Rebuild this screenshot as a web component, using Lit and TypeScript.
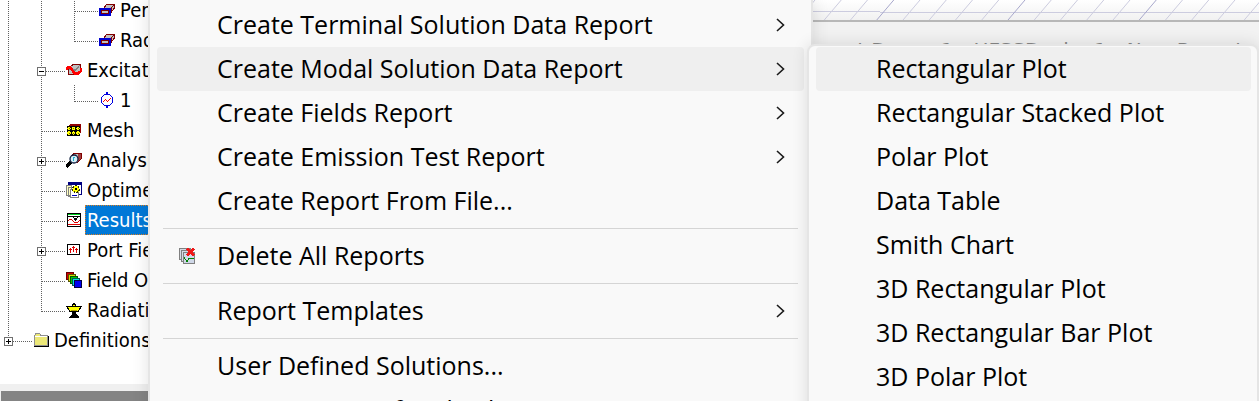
import { LitElement, html, svg, css, nothing } from "lit";
import { customElement } from "lit/decorators.js";
import { classMap } from "lit/directives/class-map.js";

const box = svg`
  <path d="M4.500 6.500 7.500 2.500H15V6.500L12 10.500V6.500Z" fill="#c0c0c0" stroke="#800000"/>
  <path d="M12 6 15 3" stroke="#800000"/>
  <rect x="1" y="7" width="10" height="6" fill="#c0c0c0" stroke="#0000d0" stroke-width="2"/>
  <rect x="2.500" y="8.500" width="7" height="3" fill="#c0c0c0" stroke="#800000"/>`;

const icons: Record<string, unknown> = {
  box,
  excitation: svg`
    <path d="M2.500 6.500 7 2.500H14.500V9L11 12.500H2.500Z" fill="#c0c0c0" stroke="#800000"/>
    <path d="M3 7H10L14 3M7 10 13 5" fill="none" stroke="#808080"/>
    <path d="M0 8 2 5.500H4L9 11.500H12L15 9V6" fill="none" stroke="#f00" stroke-width="2.600"/>`,
  port: svg`
    <path d="M5.500 2.500H10.500L13.500 5.500V10.500L10.500 13.500H5.500L2.500 10.500V5.500Z" fill="#fff" stroke="#0000e0"/>
    <path d="M8 0V3M8 13V16" stroke="#0000e0" stroke-width="2"/>
    <path d="M4 9.500H5M5 8.500H6M6 7.500H7M7 8.500H8M8 9.500H9M9 8.500H10M10 7.500H11M11 6.500H12" fill="none" stroke="#f00" stroke-width="1.800"/>`,
  mesh: svg`
    <path d="M2 4 5 2H15V10L13 12V4Z" fill="#900000"/>
    <rect x="1" y="4" width="13" height="10" fill="#000"/>
    ${[3, 7.5, 12].map((x) => [6.5, 11].map((y) => svg`<circle cx=${x} cy=${y} r="1.800" fill="#ff0"/><rect x=${x - 0.5} y=${y - 0.5} width="1" height="1" fill="#660"/>`))}`,
  analysis: svg`
    <path d="M5 4 9 1H15.500V6L11 11Z" fill="#c0c0c0" stroke="#800000"/>
    <path d="M12 2H15V6L12 9Z" fill="#a04040"/>
    <path d="M0 15 5 10" stroke="#000" stroke-width="3"/>
    <circle cx="8" cy="7" r="4" fill="#d8eef8" stroke="#102040" stroke-width="1.300" shape-rendering="auto"/>
    <path d="M7 9V5H9" fill="none" stroke="#20b0d0"/>`,
  optimetrics: svg`
    <rect x="2.500" y="0.500" width="13" height="12" fill="#fff" stroke="#000080"/>
    <path d="M2 1.500H16" stroke="#000080" stroke-width="2"/>
    <path d="M0.500 3.500H5V13.500H0.500ZM2.500 5.500H8V14.500H2.500Z" fill="#ffffc0" stroke="#808080"/>
    <rect x="4.500" y="7.500" width="8" height="8" fill="#fff" stroke="#808080"/>
    <circle cx="10" cy="7" r="3.500" fill="#ff0" stroke="#303000" stroke-dasharray="2 1" stroke-width="1.500"/>
    <circle cx="10" cy="7" r="1.200" fill="#000"/>
    <path d="M6 13.500H11" stroke="#0000c0"/>`,
  results: svg`
    <rect x="1.500" y="1.500" width="13" height="13" fill="#fff" stroke="#000"/>
    <path d="M2 2.500H14" stroke="#00d020"/><path d="M2 4.500H14" stroke="#000"/>
    <path d="M2 8.500H3M3 7.500H6M6 8.500H7M7 9.500H8M8 10.500H12M12 9.500H13M13 8.500H14M2 12.500H14" fill="none" stroke="#e00000"/>
    <path d="M7 5.500H8M11 5.500H12M8 6.500H11M8 7.500H11M9 8.500H10" stroke="#000"/>`,
  portField: svg`
    <rect x="1.500" y="2.500" width="12" height="10" fill="#fff" stroke="#000"/>
    <path d="M4.500 6V11M7.500 4V10M10.500 6V11M3 7.500H6M6 5.500H9M9 7.500H12" stroke="#e00000"/>`,
  field: svg`
    <rect x="0.500" y="0.500" width="7" height="7" fill="#d00000" stroke="#600"/>
    <rect x="2.500" y="2.500" width="7" height="7" fill="#d8d800" stroke="#550"/>
    <rect x="4.500" y="4.500" width="7" height="7" fill="#00c800" stroke="#050"/>
    <rect x="6.500" y="6.500" width="7" height="7" fill="#00e0e0" stroke="#055"/>
    <rect x="8.500" y="8.500" width="7" height="7" fill="#0000f0" stroke="#000040"/>`,
  radiation: svg`
    <path d="M0.500 4.500H15.500L12 9.500H4Z" fill="#ff0" stroke="#000"/>
    <path d="M6 4 8 1 10 4Z" fill="#ff0" stroke="#000"/>
    <path d="M5 8H11" stroke="#b0a000"/>
    <path d="M6 10H10V12L13 15V16H3V15L6 12Z" fill="#000"/>`,
  folder: svg`
    <path d="M1.500 13.500V3.500L3 1.500H6.500L8 3.500H14.500V13.500Z" fill="#ece878" stroke="#909090"/>
    <path d="M2 4.500H14" stroke="#fff"/>
    <path d="M1 14H15V4" fill="none" stroke="#000"/>`,
  remove: svg`
    <rect x="0.500" y="0.500" width="11" height="11" fill="#d4dae4" stroke="#808080"/>
    <rect x="2.500" y="2.500" width="11" height="11" fill="#d4dae4" stroke="#808080"/>
    <rect x="4.500" y="4.500" width="11" height="11" fill="#d0d8e8" stroke="#808080"/>
    <path d="M5 9 8 14 10 10.500H15" fill="none" stroke="#008000"/>
    <path d="M8 0.500 15 7.500M15 0.500 8 7.500" stroke="#f01818" stroke-width="2.200"/>`,
};

const icon = (name: string) => html`<svg class="icon" width="16" height="16" viewBox="0 0 16 16" shape-rendering="crispEdges" aria-hidden="true">${icons[name]}</svg>`;

/* Guide codes: "|" passing line, "t" branch, "l" last branch, "+" / "-" branch with expander, "e" last branch with expander */
interface Node { guides: string; icon: string; label: string; selected?: boolean }
const nodes: Node[] = [
  { guides: "||t", icon: "box", label: "PerfE1" },
  { guides: "||l", icon: "box", label: "Rad1" },
  { guides: "|-", icon: "excitation", label: "Excitations" },
  { guides: "||l", icon: "port", label: "1" },
  { guides: "|t", icon: "mesh", label: "Mesh" },
  { guides: "|+", icon: "analysis", label: "Analysis" },
  { guides: "|t", icon: "optimetrics", label: "Optimetrics" },
  { guides: "|t", icon: "results", label: "Results", selected: true },
  { guides: "|+", icon: "portField", label: "Port Field Display" },
  { guides: "|t", icon: "field", label: "Field Overlays" },
  { guides: "|l", icon: "radiation", label: "Radiation" },
  { guides: "e", icon: "folder", label: "Definitions" },
];

const guide = (code: string) => {
  const expander = "+-e".includes(code);
  const branch = code !== "|";
  const last = code === "l" || code === "e";
  return html`<svg class="guide" width="33" height="30" viewBox="0 0 33 30" shape-rendering="crispEdges" aria-hidden="true">
    <g fill="none" stroke="#606060" stroke-dasharray="1 1">
      <path d=${last ? "M8.500 0V17" : "M8.500 0V30"} />
      ${branch ? svg`<path d="M9 16.500H33"/>` : nothing}
    </g>
    ${expander
      ? svg`<rect x="4.500" y="12.500" width="8" height="8" fill="#fff" stroke="#707070"/>
          <path d=${code === "-" ? "M6 16.500H11" : "M6 16.500H11M8.500 14V19"} stroke="#000"/>`
      : nothing}
  </svg>`;
};

interface Item { label?: string; sub?: boolean; icon?: string; active?: boolean }
const mainItems: Item[] = [
  { label: "Create Terminal Solution Data Report", sub: true },
  { label: "Create Modal Solution Data Report", sub: true, active: true },
  { label: "Create Fields Report", sub: true },
  { label: "Create Emission Test Report", sub: true },
  { label: "Create Report From File..." },
  {},
  { label: "Delete All Reports", icon: "remove" },
  {},
  { label: "Report Templates", sub: true },
  {},
  { label: "User Defined Solutions..." },
  { label: "Create User Defined Solution" },
];
const plotItems: Item[] = [
  { label: "Rectangular Plot", active: true },
  { label: "Rectangular Stacked Plot" },
  { label: "Polar Plot" },
  { label: "Data Table" },
  { label: "Smith Chart" },
  { label: "3D Rectangular Plot" },
  { label: "3D Rectangular Bar Plot" },
  { label: "3D Polar Plot" },
];

const menuItem = (item: Item) =>
  item.label
    ? html`<button class=${classMap({ item: true, active: !!item.active })} role="menuitem">
        <span class="slot">${item.icon ? icon(item.icon) : nothing}</span>
        <span class="text">${item.label}</span>
        ${item.sub
          ? html`<svg class="chevron" width="10" height="14" viewBox="0 0 10 14" aria-hidden="true"><path d="M1 1 7.500 7 1 13" fill="none" stroke="#1a1a1a" stroke-width="1.600"/></svg>`
          : nothing}
      </button>`
    : html`<hr class="rule" />`;

@customElement("app-root")
export class AppRoot extends LitElement {
  static styles = css`
    :host {
      display: block;
      position: relative;
      height: 100vh;
      overflow: hidden;
      background: #f0f0f0;
      color: #000;
    }
    .workspace { display: grid; grid-template-columns: 160px 1fr; height: 100%; }
    .side { display: flex; flex-direction: column; min-width: 0; overflow: hidden; }
    .tree {
      background: #fff;
      overflow: hidden;
      padding-bottom: 29px;
      font: 20px/30px "DejaVu Sans Condensed", "Noto Sans", sans-serif;
    }
    .node { display: flex; align-items: center; height: 30px; white-space: nowrap; }
    .node:first-child { margin-top: -5px; }
    .guide, .icon { display: block; flex: none; }
    .name { box-sizing: border-box; height: 30px; line-height: 30px; margin-left: 3px; padding: 0 2px; }
    .selected .name { background: #0078d7; color: #fff; outline: 1px dotted #e08020; outline-offset: -1px; }
    .dock { flex: 1; margin: 7px 0 0 1px; background: #848484; }
    .report { display: flex; flex-direction: column; background: #f2f2f2; min-width: 0; }
    .plot { height: 20px; background: linear-gradient(#fff, #f1f1f1); border-bottom: 2px solid #b8b8b8; overflow: hidden; }
    .grid { display: block; width: 100%; height: 20px; }
    .caption {
      align-self: flex-end;
      padding: 16px 16px 0 0;
      color: #888;
      font: 20px/24px "DejaVu Sans", sans-serif;
      white-space: nowrap;
    }
    .menu {
      position: absolute;
      box-sizing: border-box;
      background: #f9f9f9;
      border: 2px solid #e5e5e5;
      box-shadow: 0 0 16px rgba(0, 0, 0, 0.12);
      font: 25px/42px "Open Sans", "Noto Sans", sans-serif;
    }
    .main { left: 148px; top: 0; width: 665px; min-height: 100%; border-width: 0 2px; padding: 3px 7px; }
    .plots { left: 807px; right: 0; top: 44px; min-height: 100%; padding: 1px 6px 1px 7px; border-radius: 8px; }
    .item {
      display: flex;
      align-items: center;
      width: 100%;
      height: 44px;
      border: 0;
      border-radius: 4px;
      padding: 0 18px 0 0;
      background: none;
      color: inherit;
      font: inherit;
      text-align: left;
      white-space: nowrap;
    }
    .item.active { background: #efefef; }
    .slot { flex: none; box-sizing: border-box; width: 60px; padding-left: 22px; }
    .text { flex: 1; padding-bottom: 2px; }
    .rule { border: 0; height: 1px; margin: 5px 6px; background: #d5d5d5; }
  `;

  render() {
    const lines = Array.from({ length: 60 }, (_, i) => i);
    return html`
      <div class="workspace">
        <div class="side">
          <div class="tree" role="tree">
            ${nodes.map(
              (n) => html`<div class=${classMap({ node: true, selected: !!n.selected })} role="treeitem">
                ${[...n.guides].map(guide)}${icon(n.icon)}<span class="name">${n.label}</span>
              </div>`
            )}
          </div>
          <div class="dock"></div>
        </div>
        <div class="report">
          <div class="plot">
            <svg class="grid" aria-hidden="true">
              <path d="M0 11.500H720M720 12.500H2000" stroke="#ccccdf" shape-rendering="crispEdges" />
              ${lines.map((i) => svg`<path d=${`M${8 + i * 26.25} 20l17 -20`} stroke=${i % 5 === 2 ? "#a8a8cc" : "#ccccdf"}/>`)}
            </svg>
          </div>
          <div class="caption">Report Demo_1 - HFSSDesign1 - New Report</div>
        </div>
      </div>
      <div class="menu main" role="menu">${mainItems.map(menuItem)}</div>
      <div class="menu plots" role="menu">${plotItems.map(menuItem)}</div>
    `;
  }
}
